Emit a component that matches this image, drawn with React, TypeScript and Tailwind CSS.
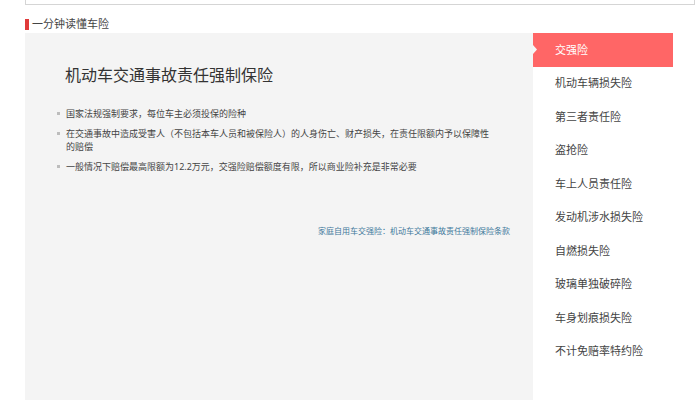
const tabs = [
  '交强险',
  '机动车辆损失险',
  '第三者责任险',
  '盗抢险',
  '车上人员责任险',
  '发动机涉水损失险',
  '自燃损失险',
  '玻璃单独破碎险',
  '车身划痕损失险',
  '不计免赔率特约险',
];

const points = [
  '国家法规强制要求，每位车主必须投保的险种',
  '在交通事故中造成受害人（不包括本车人员和被保险人）的人身伤亡、财产损失，在责任限额内予以保障性的赔偿',
  '一般情况下赔偿最高限额为12.2万元，交强险赔偿额度有限，所以商业险补充是非常必要',
];

function TabList() {
  return (
    <nav aria-label="车险险种" className="flex h-[335px] w-[140px] shrink-0 flex-col">
      {tabs.map((tab, i) => (
        <button
          key={tab}
          type="button"
          aria-current={i === 0}
          className={
            i === 0
              ? 'relative flex-1 bg-[#ff6666] pl-[22px] text-left text-[11px] leading-4 text-white'
              : 'flex-1 pl-[22px] text-left text-[11px] leading-4 text-[#444444]'
          }
        >
          {i === 0 && (
            <svg className="absolute top-3 left-0" width="4" height="9" viewBox="0 0 4 9" aria-hidden="true">
              <path d="M0 0L4 4.5L0 9Z" fill="#f7f7f7" />
            </svg>
          )}
          {tab}
        </button>
      ))}
    </nav>
  );
}

export default function App() {
  return (
    <div className="min-h-screen bg-white pl-[25px] font-['Noto_Sans','Noto_Sans_CJK_SC',sans-serif]">
      <div className="mr-[5px] h-[5px] border-x border-b border-[#d5d5d5]" />
      <main className="pt-[10px] pr-[27px]">
        <h2 className="flex h-[18px] items-center gap-[3px] text-[11px] leading-4 text-[#444444]">
          <span className="h-[11px] w-1 bg-[#e03a3a]" />
          一分钟读懂车险
        </h2>
        <div className="flex">
          <section className="min-h-[367px] min-w-0 flex-1 bg-[#f4f4f4] pt-[30px] pr-[23px] pl-10">
            <h1 className="text-[16px] leading-6 text-[#333333]">机动车交通事故责任强制保险</h1>
            <ul className="-ml-2 mt-5 flex max-w-[438px] flex-col gap-[7px] text-[9px] leading-[13px] text-[#444444]">
              {points.map((point) => (
                <li key={point} className="flex gap-[6px]">
                  <span className="mt-[5px] size-[3px] shrink-0 bg-[#bdbdbd]" />
                  <span>{point}</span>
                </li>
              ))}
            </ul>
            <p className="mt-[52px] text-right text-[8px] leading-3">
              <a href="#terms" className="text-[#41789b]">
                家庭自用车交强险：机动车交通事故责任强制保险条款
              </a>
            </p>
          </section>
          <TabList />
        </div>
      </main>
    </div>
  );
}
